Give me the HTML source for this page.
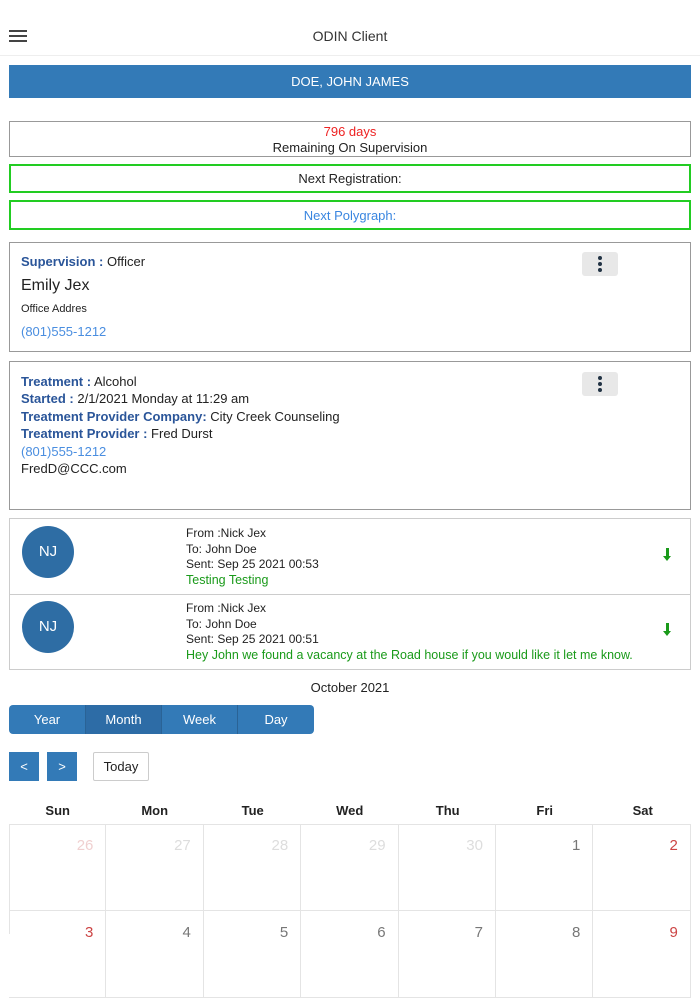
<!DOCTYPE html><html><head><style>
*{box-sizing:border-box;margin:0;padding:0}
body{width:700px;height:934px;overflow:hidden;background:#fff;font-family:"Liberation Sans",sans-serif;color:#222;position:relative;font-size:13px}
.a{position:absolute}
.box{position:absolute;left:9px;width:682px;border:1px solid #999;background:#fff}
.g{border:2px solid #2c2}
.c{text-align:center}
.lb{color:#2a5599;font-weight:bold}
.lnk{color:#4a8ee0}
.dots{position:absolute;left:572px;width:36px;height:24px;background:#e8e8e8;border-radius:3px}
.dots i{position:absolute;left:16px;width:4px;height:4px;background:#234;border-radius:50%}
.av{position:absolute;left:22px;width:52px;height:52px;border-radius:50%;background:#2e6da4;color:#fff;font-size:15px;text-align:center;line-height:52px}
.arr{position:absolute;left:666px;width:3px;height:10px;background:#1a9a1a}
.arr:after{content:"";position:absolute;left:-3px;top:8px;border-left:4.5px solid transparent;border-right:4.5px solid transparent;border-top:5px solid #1a9a1a}
.seg{position:absolute;top:705px;height:29px;background:#337ab7;color:#fff;font-size:13px;text-align:center;line-height:29px}
.cell{position:absolute;border-right:1px solid #e4e4e4;border-bottom:1px solid #e4e4e4;height:87px;width:97.4px}
.cell span{position:absolute;right:12px;top:13px;font-size:15px}
.dh{position:absolute;top:803px;width:97.4px;text-align:center;font-weight:bold;font-size:13px}
</style></head><body>
<div class="a" style="left:9px;top:30px;width:18px;height:2px;background:#444;box-shadow:0 5px 0 #444,0 10px 0 #444"></div>
<div class="a c" style="left:0;top:28px;width:700px;font-size:14px;color:#333">ODIN Client</div>
<div class="a" style="left:0;top:55px;width:700px;height:1px;background:#eee"></div>
<div class="a c" style="left:9px;top:65px;width:682px;height:33px;background:#337ab7;color:#fff;line-height:33px;font-size:13px">DOE, JOHN JAMES</div>
<div class="box c" style="top:121px;height:36px;padding-top:2px;line-height:16px"><div style="color:#e22">796 days</div><div>Remaining On Supervision</div></div>
<div class="box g c" style="top:164px;height:29px;line-height:26px">Next Registration:</div>
<div class="box g c" style="top:200px;height:30px;line-height:27px;color:#3a86e0">Next Polygraph:</div>
<div class="box" style="top:242px;height:110px;padding:11px">
<div><span class="lb">Supervision :</span> Officer</div>
<div style="font-size:16px;margin-top:8px">Emily Jex</div>
<div style="font-size:11px;margin-top:8px">Office Addres</div>
<div class="lnk" style="margin-top:9px">(801)555-1212</div>
<div class="dots" style="top:9px"><i style="top:4px"></i><i style="top:10px"></i><i style="top:16px"></i></div>
</div>
<div class="box" style="top:361px;height:149px;padding:11px;line-height:17.4px">
<div><span class="lb">Treatment :</span> Alcohol</div>
<div><span class="lb">Started :</span> 2/1/2021 Monday at 11:29 am</div>
<div><span class="lb">Treatment Provider Company:</span> City Creek Counseling</div>
<div><span class="lb">Treatment Provider :</span> Fred Durst</div>
<div class="lnk">(801)555-1212</div>
<div>FredD@CCC.com</div>
<div class="dots" style="top:10px"><i style="top:4px"></i><i style="top:10px"></i><i style="top:16px"></i></div>
</div>
<div class="box" style="top:518px;height:152px;border-color:#ccc"></div>
<div class="a" style="left:10px;top:594px;width:680px;height:1px;background:#ccc"></div>
<div class="av" style="top:526px">NJ</div>
<div class="a" style="left:186px;top:526px;font-size:12px;line-height:15.5px">From :Nick Jex<br>To: John Doe<br>Sent: Sep 25 2021 00:53<br><span style="color:#1a9a1a;font-size:12.5px">Testing Testing</span></div>
<div class="arr" style="top:548px"></div>
<div class="av" style="top:601px">NJ</div>
<div class="a" style="left:186px;top:601px;font-size:12px;line-height:15.5px">From :Nick Jex<br>To: John Doe<br>Sent: Sep 25 2021 00:51<br><span style="color:#1a9a1a;font-size:12.5px">Hey John we found a vacancy at the Road house if you would like it let me know.</span></div>
<div class="arr" style="top:623px"></div>
<div class="a c" style="left:0;top:680px;width:700px">October 2021</div>
<div class="seg" style="left:9px;width:76px;border-radius:4px 0 0 4px">Year</div>
<div class="seg" style="left:85px;width:76px;background:#2d6ca6;border-left:1px solid #2a6396">Month</div>
<div class="seg" style="left:161px;width:76px;border-left:1px solid #2a6396">Week</div>
<div class="seg" style="left:237px;width:77px;border-left:1px solid #2a6396;border-radius:0 4px 4px 0">Day</div>
<div class="a c" style="left:9px;top:752px;width:30px;height:29px;background:#337ab7;color:#fff;line-height:29px">&lt;</div>
<div class="a c" style="left:47px;top:752px;width:30px;height:29px;background:#337ab7;color:#fff;line-height:29px">&gt;</div>
<div class="a c" style="left:93px;top:752px;width:56px;height:29px;border:1px solid #ccc;border-radius:2px;line-height:27px">Today</div>
<div class="dh" style="left:9px">Sun</div><div class="dh" style="left:106px">Mon</div><div class="dh" style="left:204px">Tue</div><div class="dh" style="left:301px">Wed</div><div class="dh" style="left:399px">Thu</div><div class="dh" style="left:496px">Fri</div><div class="dh" style="left:594px">Sat</div>
<div class="a" style="left:9px;top:824px;width:682px;height:110px;border-left:1px solid #e4e4e4;border-top:1px solid #e4e4e4"></div>
<div class="cell" style="left:9px;top:824px"><span style="color:#f0d0d0">26</span></div>
<div class="cell" style="left:106.4px;top:824px"><span style="color:#ddd">27</span></div>
<div class="cell" style="left:203.8px;top:824px"><span style="color:#ddd">28</span></div>
<div class="cell" style="left:301.2px;top:824px"><span style="color:#ddd">29</span></div>
<div class="cell" style="left:398.6px;top:824px"><span style="color:#ddd">30</span></div>
<div class="cell" style="left:496px;top:824px"><span style="color:#777">1</span></div>
<div class="cell" style="left:593.4px;top:824px"><span style="color:#c44">2</span></div>
<div class="cell" style="left:9px;top:911px"><span style="color:#c44">3</span></div>
<div class="cell" style="left:106.4px;top:911px"><span style="color:#777">4</span></div>
<div class="cell" style="left:203.8px;top:911px"><span style="color:#777">5</span></div>
<div class="cell" style="left:301.2px;top:911px"><span style="color:#777">6</span></div>
<div class="cell" style="left:398.6px;top:911px"><span style="color:#777">7</span></div>
<div class="cell" style="left:496px;top:911px"><span style="color:#777">8</span></div>
<div class="cell" style="left:593.4px;top:911px"><span style="color:#c44">9</span></div>
</body></html>
